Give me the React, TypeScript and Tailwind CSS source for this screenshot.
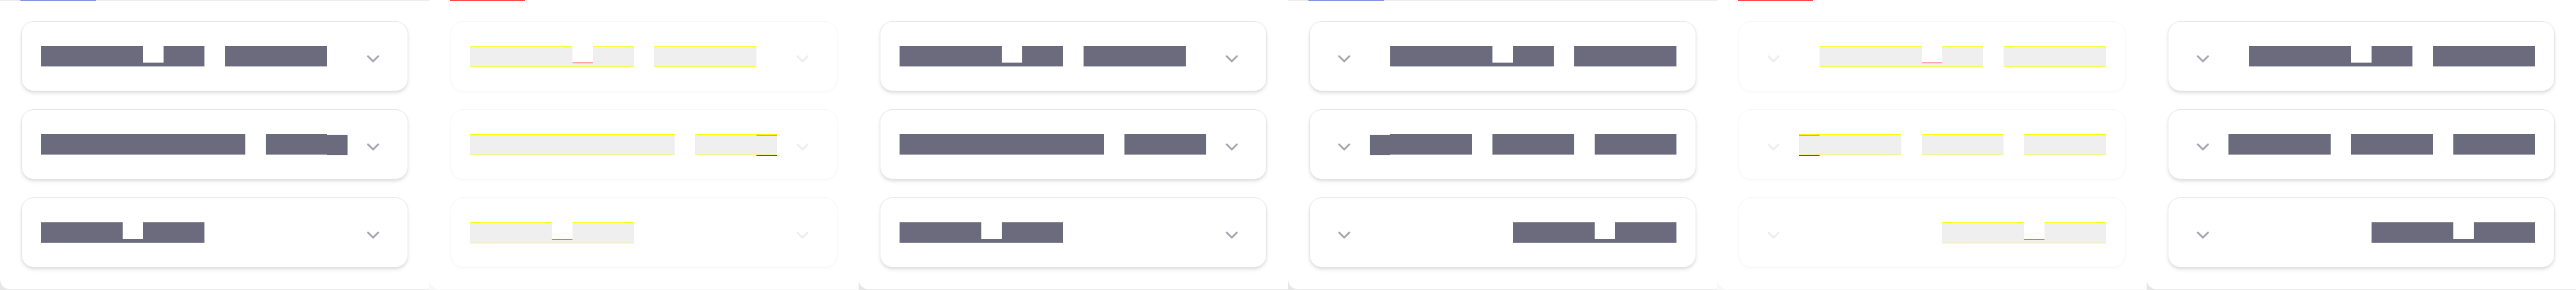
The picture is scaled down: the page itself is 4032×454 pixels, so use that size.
type Mode = "solid" | "diff";
type Dir = "ltr" | "rtl";

// X = full box, p = descender only, s = box nudged 1px down, space = gap
const LTR_ACTUAL = ["XXXXXpXX XXXXX", "XXXXXXXXXX XXXs", "XXXXpXXX"];
const LTR_EXPECTED = ["XXXXXpXX XXXXX", "XXXXXXXXXX XXXX", "XXXXpXXX"];
const RTL_ACTUAL = ["XXXXXpXX XXXXX", "sXXXX XXXX XXXX", "XXXXpXXX"];
const RTL_EXPECTED = ["XXXXXpXX XXXXX", "XXXXX XXXX XXXX", "XXXXpXXX"];

function Glyph({ t, mode }: { t: string; mode: Mode }) {
  if (t === " ") return <span className="block h-8 w-8 shrink-0" />;

  if (mode === "solid") {
    if (t === "p")
      return (
        <span className="flex h-8 w-8 shrink-0 flex-col justify-end">
          <span className="block h-[6px] w-8 bg-[#6b6b7d]" />
        </span>
      );
    return (
      <span
        className={
          t === "s"
            ? "block h-8 w-8 shrink-0 translate-y-px bg-[#6b6b7d]"
            : "block h-8 w-8 shrink-0 bg-[#6b6b7d]"
        }
      />
    );
  }

  // diff view: edges that moved are painted yellow (slight) or red (strong)
  if (t === "p")
    return (
      <span className="flex h-8 w-8 shrink-0 flex-col">
        <span className="block h-[26px] w-8 shrink-0" />
        <span className="block h-px w-8 shrink-0 bg-[#ff0000]" />
        <span className="block h-[5px] w-8 shrink-0 bg-[#efefef]" />
        <span className="block h-px w-8 shrink-0 bg-[#ffff00]" />
      </span>
    );
  if (t === "s")
    return (
      <span className="flex h-8 w-8 shrink-0 flex-col">
        <span className="block h-px w-8 shrink-0 bg-[#ffff00]" />
        <span className="block h-px w-8 shrink-0 bg-[#ff0000]" />
        <span className="block h-[30px] w-8 shrink-0 bg-[#efefef]" />
        <span className="block h-px w-8 shrink-0 bg-[#ffff00]" />
        <span className="block h-px w-8 shrink-0 bg-[#ff0000]" />
      </span>
    );
  return (
    <span className="flex h-8 w-8 shrink-0 flex-col">
      <span className="block h-px w-8 shrink-0 bg-[#ffff00]" />
      <span className="block h-[31px] w-8 shrink-0 bg-[#efefef]" />
      <span className="block h-px w-8 shrink-0 bg-[#ffff00]" />
    </span>
  );
}

function Chevron({ faint }: { faint: boolean }) {
  return (
    <svg
      width="20"
      height="12"
      viewBox="0 0 20 12"
      fill="none"
      className={faint ? "mt-2 text-[#ededed]" : "mt-2 text-[#a4a4b2]"}
    >
      <polyline
        points="2,2 10,10 18,2"
        stroke="currentColor"
        strokeWidth="3"
        strokeLinecap="round"
        strokeLinejoin="round"
      />
    </svg>
  );
}

function Row({ text, mode, dir }: { text: string; mode: Mode; dir: Dir }) {
  const faint = mode === "diff";
  return (
    <div
      className={
        (faint
          ? "border-[#f6f6f6] shadow-[0_4px_6px_-1px_rgba(0,0,0,0.02)] "
          : "border-[#e4e4e7] shadow-[0_4px_6px_-1px_rgba(0,0,0,0.1),0_2px_4px_-2px_rgba(0,0,0,0.1)] ") +
        (dir === "rtl" ? "flex-row-reverse " : "flex-row ") +
        "flex h-[110px] items-center rounded-[20px] border bg-white px-[30px]"
      }
    >
      <div className={dir === "rtl" ? "flex flex-1 justify-end" : "flex flex-1 justify-start"}>
        {text.split("").map((t, i) => (
          <Glyph key={i} t={t} mode={mode} />
        ))}
      </div>
      <div className="flex w-12 justify-center">
        <Chevron faint={faint} />
      </div>
    </div>
  );
}

function Panel({
  lines,
  mode,
  dir,
  tab,
}: {
  lines: string[];
  mode: Mode;
  dir: Dir;
  tab: "blue" | "red" | null;
}) {
  return (
    <div className={mode === "diff" ? "h-[454px] w-[672px] bg-[#f7f7f7]" : "h-[454px] w-[672px]"}>
      <div className="flex h-[453px] w-[672px] flex-col rounded-bl-[16px] bg-white">
        <div className={tab === "blue" ? "h-px w-full bg-[#e5e5e5]" : "h-px w-full"}>
          {tab && (
            <div
              className={
                tab === "blue" ? "ml-8 h-px w-[118px] bg-[#4f6bd9]" : "ml-8 h-px w-[118px] bg-[#ff0000]"
              }
            />
          )}
        </div>
        <div className="flex flex-col gap-[28px] px-[33px] pt-[32px]">
          {lines.map((l, i) => (
            <Row key={i} text={l} mode={mode} dir={dir} />
          ))}
        </div>
      </div>
    </div>
  );
}

export default function App() {
  return (
    <div className="flex h-[454px] w-[4032px] bg-[#e6e6e6] font-['Liberation_Sans',sans-serif]">
      <Panel lines={LTR_ACTUAL} mode="solid" dir="ltr" tab="blue" />
      <Panel lines={LTR_ACTUAL} mode="diff" dir="ltr" tab="red" />
      <Panel lines={LTR_EXPECTED} mode="solid" dir="ltr" tab={null} />
      <Panel lines={RTL_ACTUAL} mode="solid" dir="rtl" tab="blue" />
      <Panel lines={RTL_ACTUAL} mode="diff" dir="rtl" tab="red" />
      <Panel lines={RTL_EXPECTED} mode="solid" dir="rtl" tab={null} />
    </div>
  );
}
